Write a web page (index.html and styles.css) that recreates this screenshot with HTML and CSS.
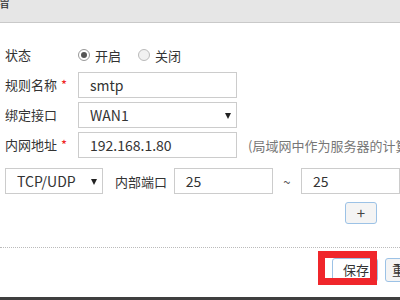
FILE: index.html
```html
<!DOCTYPE html>
<html>
<head>
<meta charset="utf-8">
<link rel="stylesheet" href="styles.css">
</head>
<body>
<div class="page">
  <div class="header"><span class="title">增</span></div>
  <div class="form">
    <div class="row row-status">
      <div class="label">状态</div>
      <label class="radio"><span class="dot on"></span>开启</label>
      <label class="radio"><span class="dot"></span>关闭</label>
    </div>
    <div class="row">
      <div class="label">规则名称<span class="req">*</span></div>
      <div class="field">smtp</div>
    </div>
    <div class="row">
      <div class="label">绑定接口</div>
      <div class="field select">WAN1<span class="arrow"></span></div>
    </div>
    <div class="row">
      <div class="label">内网地址<span class="req">*</span></div>
      <div class="field">192.168.1.80</div>
      <div class="hint">(局域网中作为服务器的计算机IP)</div>
    </div>
    <div class="row row-port">
      <div class="field select proto">TCP/UDP<span class="arrow"></span></div>
      <div class="plabel">内部端口</div>
      <div class="field port">25</div>
      <div class="tilde">~</div>
      <div class="field port">25</div>
    </div>
    <div class="row row-add">
      <div class="add">+</div>
    </div>
  </div>
  <div class="footer">
    <div class="btn save">保存</div>
    <div class="btn reset">重置</div>
    <div class="mark"></div>
  </div>
  <div class="bottom"></div>
</div>
</body>
</html>
```
FILE: styles.css
```css
html, body {
  margin: 0;
  padding: 0;
}
body {
  width: 400px;
  height: 300px;
  overflow: hidden;
  background: #fff;
  font-family: "Noto Sans CJK SC", "Microsoft YaHei", sans-serif;
  color: #333;
  font-size: 13px;
}
.page {
  position: relative;
  width: 400px;
  height: 300px;
  overflow: hidden;
}
.header {
  height: 22px;
  background: #e6e6e6;
  border-bottom: 1px solid #c9c9c9;
  overflow: hidden;
}
.title {
  display: block;
  margin-left: -5px;
  margin-top: -9px;
  font-size: 15px;
  line-height: 20px;
  color: #333;
}
.form {
  padding-top: 19px;
}
.row {
  display: flex;
  align-items: center;
  height: 26px;
  margin-bottom: 4px;
  white-space: nowrap;
}
.label {
  width: 73px;
  padding-left: 5px;
  box-sizing: content-box;
  flex: none;
  line-height: 26px;
}
.req {
  color: #e22;
  margin-left: 4px;
  font-size: 13px;
}
.radio {
  display: flex;
  align-items: center;
  margin-right: 17px;
}
.dot {
  width: 10px;
  height: 10px;
  border: 1px solid #bbb;
  border-radius: 50%;
  background: #f1f1f1;
  margin-right: 5px;
  position: relative;
}
.dot.on {
  border-color: #999;
  background: #fff;
}
.dot.on::after {
  content: "";
  position: absolute;
  left: 2px;
  top: 2px;
  width: 6px;
  height: 6px;
  border-radius: 50%;
  background: #555;
}
.field {
  flex: none;
  width: 159px;
  height: 26px;
  box-sizing: border-box;
  border: 1px solid #ccc;
  padding-left: 11px;
  line-height: 24px;
  font-size: 14px;
  color: #333;
  position: relative;
}
.select .arrow {
  position: absolute;
  right: 5px;
  top: 10px;
  width: 0;
  height: 0;
  border-left: 3px solid transparent;
  border-right: 3px solid transparent;
  border-top: 6px solid #222;
}
.hint {
  margin-left: 11px;
  color: #777;
  font-size: 13px;
}
.row-port {
  margin-top: 10px;
}
.proto {
  margin-left: 5px;
  width: 98px;
}
.plabel {
  margin-left: 12px;
  width: 61px;
  padding-right: 3px;
}
.port {
  width: 99px;
}
.tilde {
  width: 31px;
  text-align: center;
  color: #555;
}
.row-add {
  justify-content: flex-start;
  margin-top: 7px;
  height: 23px;
}
.add {
  margin-left: 345px;
  width: 32px;
  height: 22px;
  box-sizing: border-box;
  border: 1px solid #9cc2e6;
  border-radius: 3px;
  background: #f4f4f4;
  text-align: center;
  line-height: 19px;
  font-size: 15px;
  color: #444;
}
.footer {
  position: relative;
  margin-top: 23px;
  border-top: 1px dotted #bbb;
  height: 50px;
  display: flex;
  align-items: flex-start;
  padding-top: 10px;
  box-sizing: border-box;
  white-space: nowrap;
}
.btn {
  flex: none;
  height: 24px;
  box-sizing: border-box;
  border: 1px solid #9cc2e6;
  border-radius: 3px;
  background: #f4f4f4;
  line-height: 22px;
  font-size: 13px;
  padding: 0 10px;
  color: #333;
}
.save {
  margin-left: 332px;
  width: 46px;
  background: #fff;
}
.reset {
  margin-left: 7px;
  padding-left: 6px;
}
.mark {
  position: absolute;
  left: 318px;
  top: 3px;
  width: 59px;
  height: 34px;
  box-sizing: border-box;
  border: 7px solid #f0262b;
}
.bottom {
  height: 5px;
  background: #3f3f3f;
}
```
